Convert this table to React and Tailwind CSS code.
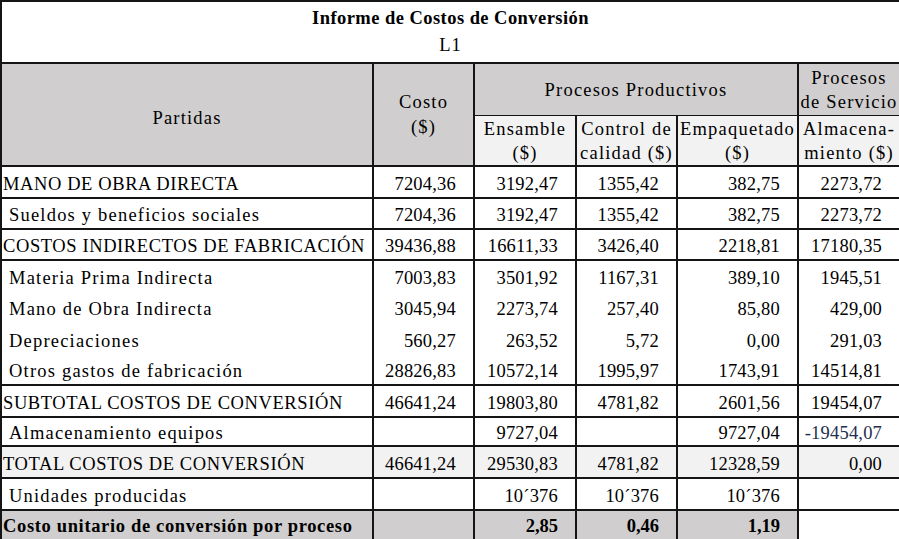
const rows = [
  { label: "MANO DE OBRA DIRECTA", vals: ["7204,36", "3192,47", "1355,42", "382,75", "2273,72"], h: "h-[32px]", line: true },
  { label: "Sueldos y beneficios sociales", sub: true, vals: ["7204,36", "3192,47", "1355,42", "382,75", "2273,72"], h: "h-[31px]", line: true },
  { label: "COSTOS INDIRECTOS DE FABRICACIÓN", vals: ["39436,88", "16611,33", "3426,40", "2218,81", "17180,35"], h: "h-[31px]", line: true },
  { label: "Materia Prima Indirecta", sub: true, vals: ["7003,83", "3501,92", "1167,31", "389,10", "1945,51"], h: "h-[32px]" },
  { label: "Mano de Obra Indirecta", sub: true, vals: ["3045,94", "2273,74", "257,40", "85,80", "429,00"], h: "h-[31px]" },
  { label: "Depreciaciones", sub: true, vals: ["560,27", "263,52", "5,72", "0,00", "291,03"], h: "h-[32px]" },
  { label: "Otros gastos de fabricación", sub: true, vals: ["28826,83", "10572,14", "1995,97", "1743,91", "14514,81"], h: "h-[30px]", line: true },
  { label: "SUBTOTAL COSTOS DE CONVERSIÓN", vals: ["46641,24", "19803,80", "4781,82", "2601,56", "19454,07"], h: "h-[32px]", line: true },
  { label: "Almacenamiento equipos", sub: true, vals: ["", "9727,04", "", "9727,04", "-19454,07"], h: "h-[29px]", line: true, neg: true },
  { label: "TOTAL COSTOS DE CONVERSIÓN", vals: ["46641,24", "29530,83", "4781,82", "12328,59", "0,00"], h: "h-[32px]", line: true, shade: true },
  { label: "Unidades producidas", sub: true, vals: ["", "10´376", "10´376", "10´376", ""], h: "h-[32px]", line: true },
];

function DataRow({ row }) {
  const bb = row.line ? "border-b-2" : "border-b-0";
  const bg = row.shade ? "bg-[#f2f2f2]" : "bg-white";
  return (
    <tr className={`${row.h} ${bg}`}>
      <td
        className={`border-x-2 border-t-0 ${bb} border-[#151515] pt-[4px] text-left whitespace-nowrap ${
          row.sub ? "pl-[7px] tracking-[1.2px]" : "pl-[1px] tracking-[0.6px]"
        }`}
      >
        {row.label}
      </td>
      {row.vals.map((v, i) => (
        <td
          key={i}
          className={`border-x-2 border-t-0 ${bb} border-[#151515] pt-[4px] pr-[17px] text-right whitespace-nowrap tracking-[0.2px] ${
            row.neg && i === 4 ? "text-[#1f2f4f] pr-[14px]" : ""
          }`}
        >
          {v}
        </td>
      ))}
    </tr>
  );
}

export default function App() {
  return (
    <div className="w-[899px] h-[539px] overflow-hidden bg-white font-[family-name:'Liberation_Serif',serif] text-[18.5px] leading-[21px] text-black">
      <table className="w-[899px] table-fixed border-collapse">
        <colgroup>
          <col className="w-[372px]" />
          <col className="w-[101px]" />
          <col className="w-[102px]" />
          <col className="w-[101px]" />
          <col className="w-[121px]" />
          <col className="w-[102px]" />
        </colgroup>
        <tbody>
          <tr className="h-[62px]">
            <td colSpan={6} className="border-2 border-[#151515] text-center align-top pt-[6px]">
              <div className="font-bold tracking-[0.45px]">Informe de Costos de Conversión</div>
              <div className="mt-[6px] tracking-[1px]">L1</div>
            </td>
          </tr>
          <tr className="h-[52px] leading-[24px] tracking-[1.2px]">
            <td rowSpan={2} className="border-2 border-[#151515] bg-[#d0cece] pt-[6px] text-center">
              Partidas
            </td>
            <td rowSpan={2} className="border-2 border-[#151515] bg-[#d0cece] leading-[25px] text-center">
              Costo
              <br />($)
            </td>
            <td colSpan={3} className="border-x-2 border-t-2 border-b border-[#151515] bg-[#d0cece] pt-[2px] text-center">
              Procesos Productivos
            </td>
            <td className="border-x-2 border-t-2 border-b border-[#151515] bg-[#d0cece] pt-[2px] text-center">
              Procesos
              <br />de Servicio
            </td>
          </tr>
          <tr className="h-[51px] bg-[#f2f2f2] leading-[24px] tracking-[1.2px]">
            <td className="border-x-2 border-b-2 border-t border-[#151515] pt-[1px] text-center">
              Ensamble
              <br />($)
            </td>
            <td className="border-x-2 border-b-2 border-t border-[#151515] pt-[1px] text-center whitespace-nowrap">
              Control de
              <br />calidad ($)
            </td>
            <td className="border-x-2 border-b-2 border-t border-[#151515] pt-[1px] text-center">
              Empaquetado
              <br />($)
            </td>
            <td className="border-x-2 border-b-2 border-t border-[#151515] pt-[1px] text-center whitespace-nowrap">
              Almacena-
              <br />miento ($)
            </td>
          </tr>
          {rows.map((r) => (
            <DataRow key={r.label} row={r} />
          ))}
          <tr className="h-[32px] font-bold">
            <td className="border-x-2 border-b-2 border-[#151515] bg-[#d0cece] pl-[1px] text-left whitespace-nowrap tracking-[0.65px]">
              Costo unitario de conversión por proceso
            </td>
            <td className="border-x-2 border-b-2 border-[#151515] bg-[#d0cece]"></td>
            <td className="border-x-2 border-b-2 border-[#151515] bg-[#d0cece] pr-[17px] text-right">2,85</td>
            <td className="border-x-2 border-b-2 border-[#151515] bg-[#d0cece] pr-[17px] text-right">0,46</td>
            <td className="border-x-2 border-b-2 border-[#151515] bg-[#d0cece] pr-[17px] text-right">1,19</td>
            <td className="border-x-2 border-b-2 border-[#151515] bg-white"></td>
          </tr>
        </tbody>
      </table>
    </div>
  );
}
